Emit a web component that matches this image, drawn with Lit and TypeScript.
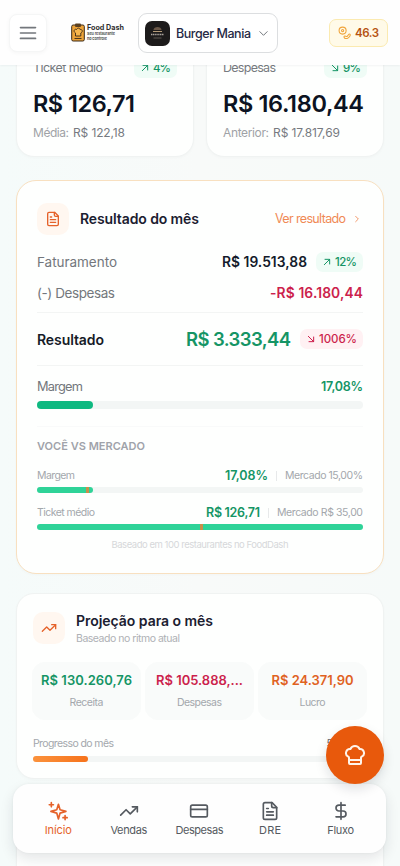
import { LitElement, html, css, svg, nothing } from "lit";
import { customElement, property } from "lit/decorators.js";
import { styleMap } from "lit/directives/style-map.js";

// Single-line label whose tracking is adjusted so that it spans a given width.
@customElement("fit-text")
class FitText extends LitElement {
  @property({ type: Number }) width = 0;
  @property() text = "";
  static styles = css`
    :host { display: inline-block; white-space: nowrap; flex: none; }
    .label { display: inline-block; white-space: pre; }
  `;
  render() {
    return html`<span class="label">${this.text}</span>`;
  }
  updated() {
    const label = this.renderRoot.querySelector(".label") as HTMLElement;
    label.style.letterSpacing = "0px";
    const natural = label.getBoundingClientRect().width;
    const step = (this.width - natural) / Math.max(1, this.text.length - 1);
    label.style.letterSpacing = `${step}px`;
    label.style.marginRight = `${-step}px`;
  }
}

const t = (text: string, width: number, cls = "") =>
  html`<fit-text class=${cls} .text=${text} .width=${width}></fit-text>`;

const shapes = {
  menu: svg`<path d="M3 5.500h18M3 12h18M3 18.500h18"/>`,
  down: svg`<path d="m4 8 8 8 8-8"/>`,
  right: svg`<path d="m8 4 8 8-8 8"/>`,
  upRight: svg`<path d="M4 20 20 4M6 4h14v14"/>`,
  downRight: svg`<path d="m4 4 16 16M20 6v14H6"/>`,
  file: svg`<path d="M14.500 2H6a2 2 0 0 0-2 2v16a2 2 0 0 0 2 2h12a2 2 0 0 0 2-2V7.500z"/><path d="M14 2v4a2 2 0 0 0 2 2h4M8 9h2M8 13h8M8 17h8"/>`,
  trend: svg`<path d="m2 17 6.500-6.500 5 5L22 7"/><path d="M16 7h6v6"/>`,
  card: svg`<rect x="2" y="5" width="20" height="14" rx="2"/><path d="M2 10h20"/>`,
  dollar: svg`<path d="M12 2v20M17 5H9.500a3.500 3.500 0 0 0 0 7h5a3.500 3.500 0 0 1 0 7H6"/>`,
  sparkle: svg`<path d="M12.500 4 14.500 10.500 21.500 12.500 14.500 14.500 12.500 21.500 10.500 14.500 3.500 12.500 10.500 10.500z"/><path d="M4 2v5M1.500 4.500h5M20.500 17.500v5M18 20h5"/>`,
  chef: svg`<path d="M17 21a1 1 0 0 0 1-1v-5.350c0-.457.316-.844.727-1.041a4 4 0 0 0-2.134-7.589 5 5 0 0 0-9.186 0 4 4 0 0 0-2.134 7.588c.411.198.727.585.727 1.041V20a1 1 0 0 0 1 1ZM6 17h12"/>`,
  coins: svg`<circle cx="8.500" cy="8.500" r="6.500"/><circle cx="8.500" cy="8.500" r="2"/><path d="M11 20c2-4 4 1 6-1s3-5 5-4-1 7-5 8-6-1-6-3z"/>`,
};
type Shape = keyof typeof shapes;
const icon = (name: Shape, cls = "") =>
  html`<svg class="icon ${cls}" viewBox="0 0 24 24">${shapes[name]}</svg>`;

const bar = (fill: number, cls: string, mark?: number) => html`
  <div class="bar ${cls}">
    <div class="fill" style=${styleMap({ width: `${fill}%` })}></div>
    ${mark === undefined ? nothing : html`<i class="mark" style=${styleMap({ left: `${mark}%` })}></i>`}
  </div>`;

@customElement("app-root")
class AppRoot extends LitElement {
  static styles = css`
    :host {
      display: block; position: relative; height: 866px; overflow: hidden;
      background: linear-gradient(90deg, #f5fbfa, #f8faf9 50%, #f6faf9);
      font-family: Inter, "Liberation Sans", sans-serif; color: #141b2b;
    }
    * { box-sizing: border-box; }
    .icon { display: block; flex: none; fill: none; stroke: currentColor; stroke-width: 2; stroke-linecap: round; stroke-linejoin: round; }
    .row { display: flex; align-items: center; justify-content: space-between; }
    .end { display: flex; align-items: center; }

    header {
      position: absolute; inset: 0 0 auto 0; height: 65px; z-index: 2; background: #fefefe;
      display: flex; align-items: center; padding: 1px 12px 0 9px; box-shadow: 0 1px 2px #0f172a0c;
    }
    .menu { width: 38px; height: 38px; border-radius: 8px; background: #fff; border: 1px solid #f5f6f6; box-shadow: 0 1px 4px #0000000a; display: grid; place-items: center; color: #73777c; }
    .menu .icon { width: 20px; height: 20px; }
    .brand { display: flex; margin: 0 0 2px 24px; width: 67px; gap: 2px; align-items: center; }
    .clip { width: 14px; height: 19px; flex: none; display: block; }
    .words { display: flex; flex-direction: column; }
    .b1 { font-size: 7.200px; line-height: 9px; font-weight: 700; color: #303030; }
    .b2 { font-size: 3.800px; line-height: 4.500px; font-weight: 600; color: #444; }
    .store { display: flex; align-items: center; width: 140px; height: 40px; border: 1px solid #dcdee0; border-radius: 9px; background: #fff; padding: 0 8px 0 6px; }
    .avatar { width: 25px; height: 25px; margin-right: 6px; flex: none; }
    .name { font-size: 12.500px; font-weight: 500; color: #262a45; }
    .store .icon { width: 11px; height: 11px; margin-left: auto; color: #666a70; }
    .credits { margin: -1px 0 0 auto; width: 59px; height: 28px; border-radius: 7px; background: #fffae8; border: 1px solid #fbeab0; display: flex; align-items: center; justify-content: space-between; padding: 0 8px; color: #b65312; font-size: 11.500px; font-weight: 600; }
    .credits .icon { width: 13px; height: 13px; color: #f0a53c; }

    main { padding: 37px 16px 0; }
    .card { background: #fefffe; border: 1px solid #f0f3f2; border-radius: 18px; box-shadow: 0 1px 3px #0f172a06; }
    .pair { display: grid; grid-template-columns: 178px 178px; gap: 12px; }
    .kpi { height: 120px; padding: 19px 16px 0; }
    .kpi .row { height: 21px; }
    .muted { font-size: 12.500px; color: #777b80; }
    .big { font-size: 23.500px; line-height: 28px; font-weight: 600; display: block; margin-top: 12px; color: #0c1322; }
    .foot { margin-top: 7px; line-height: 16px; font-size: 12px; color: #9fa2a6; display: flex; gap: 4px; }
    .foot .v { color: #767a80; }

    .chip { display: inline-flex; align-items: center; justify-content: center; height: 20px; border-radius: 7px; gap: 4px; padding: 0 6px; font-size: 11.500px; font-weight: 500; background: #effcf6; color: #159565; }
    .chip .icon { width: 8px; height: 8px; stroke-width: 3; margin-left: 1px; }
    .chip.bad { background: #fff1f3; color: #cc1f4c; }

    .result { margin-top: 23px; height: 394px; border-color: #f8e0c0; border-radius: 20px; padding: 21px 20px 0; }
    .result .head { height: 33px; }
    .tile { width: 32px; height: 32px; border-radius: 10px; background: #fff7f0; color: #e5622a; display: grid; place-items: center; flex: none; }
    .tile .icon { width: 16px; height: 16px; }
    .title { font-size: 14px; font-weight: 600; color: #1b2030; }
    .result .title { margin-left: 11px; }
    .link { display: flex; align-items: center; gap: 7px; font-size: 12.500px; color: #f08a55; padding-right: 2px; }
    .link .icon { width: 8px; height: 8px; stroke-width: 2.600; }
    .line { height: 31px; }
    .line.first { margin-top: 11px; }
    .lbl { font-size: 13.500px; color: #73777c; }
    .amt { font-size: 13.800px; font-weight: 600; }
    .red { color: #cc1f4c; }
    .green { color: #159565; }
    .orange { color: #e0621f; }
    .total { height: 54px; border-top: 1px solid #f3f5f4; border-bottom: 1px solid #f3f5f4; margin-top: 4px; }
    .strong { font-size: 14px; font-weight: 600; color: #161b28; }
    .sum { font-size: 18.500px; font-weight: 600; }
    .gap9 { gap: 9px; }
    .margin { height: 23px; margin-top: 9px; }
    .margin .lbl { font-size: 12.800px; }
    .pct { font-size: 12.500px; font-weight: 600; }
    .bar { position: relative; background: #f3f6f5; border-radius: 9px; }
    .fill { height: 100%; border-radius: 9px; background: #2fd398; }
    .b8 { height: 8px; margin-top: 3px; }
    .b8 .fill { background: #0fb981; }
    .b6 { height: 6px; margin-top: 3px; }
    .mark { position: absolute; top: 0; width: 3px; height: 6px; background: #c98f4c; }
    .sect { font-size: 11px; line-height: 16px; font-weight: 600; color: #a0a3aa; display: block; }
    .market { border-top: 1px solid #f9fafa; margin-top: 17px; padding-top: 11px; }
    .cmp { height: 17px; }
    .cmp.a { margin-top: 13px; }
    .cmp.b { margin-top: 11px; }
    .small { font-size: 10.500px; color: #a3a7ac; }
    .cmp .end { gap: 8px; }
    .sep { width: 1px; height: 10px; background: #e7e9ea; }
    .note { text-align: center; font-size: 9.500px; line-height: 14px; color: #d6d8da; margin-top: 8px; }

    .proj { margin-top: 19px; height: 186px; padding: 17px 16px 0; }
    .proj .head { display: flex; align-items: center; gap: 11px; height: 34px; }
    .titles { display: flex; flex-direction: column; margin-top: 1px; }
    .titles .title { line-height: 19px; }
    .titles .small { line-height: 15px; margin-top: 1px; color: #aeb1b5; }
    .tiles { display: grid; grid-template-columns: 109px 109px 109px; gap: 4px; margin: 17px 0 0 -1px; }
    .stat { height: 58px; border-radius: 13px; background: #f9fbfa; border: 1px solid #f9fbfa; display: flex; flex-direction: column; align-items: center; padding-top: 8px; }
    .stat .amt { font-size: 13px; line-height: 19px; }
    .stat .small { margin-top: 5px; line-height: 15px; }
    .progress { height: 16px; margin-top: 15px; padding-right: 34px; }
    .progress .day { font-size: 10.500px; color: #666a70; }
    .proj .b6 { margin-top: 5px; }
    .proj .fill { background: linear-gradient(90deg, #fb923c, #f6731c); }
    .next { margin-top: 19px; height: 200px; }

    nav { position: absolute; z-index: 2; left: 13px; right: 14px; top: 784px; height: 69px; border-radius: 16px; background: #fefefe; box-shadow: 0 6px 14px #0f172a1c, 0 0 3px #0f172a0c; display: flex; padding: 0 10px; }
    .tab { flex: 1; display: flex; flex-direction: column; align-items: center; padding-top: 17px; color: #555a60; font-size: 11px; }
    .tab .icon { width: 20px; height: 20px; }
    .tab fit-text { margin-top: 2px; line-height: 14px; }
    .tab.on { color: #e5622a; }
    .fab { position: absolute; z-index: 3; left: 326px; top: 726px; width: 58px; height: 58px; border-radius: 50%; background: #e8590c; box-shadow: 0 5px 12px #0f172a20; display: grid; place-items: center; color: #fff4ea; }
    .fab .icon { width: 24px; height: 24px; }
  `;

  render() {
    return html`
      <header>
        <div class="menu">${icon("menu")}</div>
        <div class="brand">
          <svg class="clip" viewBox="0 0 14 19">
            <rect x=".7" y="2" width="12.600" height="16" rx="1.500" fill="#eda338" stroke="#3b2a18" stroke-width="1"/>
            <rect x="4" y=".5" width="6" height="3.500" rx="1" fill="#5b4020"/>
            <path d="M4.500 13v-3C1.500 8 4 5.500 5.500 6.500 6.500 4.500 9 5 9 6.500c2-.5 3.500 2 .8 3.500v3z" fill="#f7b64c" stroke="#3b2a18" stroke-width=".9"/>
            <path d="M3.500 15.500h7" stroke="#3b2a18" stroke-width=".9"/>
          </svg>
          <div class="words">${t("Food Dash", 37, "b1")}${t("Seu restaurante", 28, "b2")}${t("no controle", 20, "b2")}</div>
        </div>
        <div class="store">
          <svg class="avatar" viewBox="0 0 25 25">
            <rect width="25" height="25" rx="7" fill="#1d1b1b"/>
            <path d="M8.500 9c0-4 8-4 8 0z" fill="#6b5848"/><path d="M8 10.500h9" stroke="#b39a78"/>
            <path d="M6 13.500h13" stroke="#a9a29c" stroke-width="1.500" stroke-dasharray="1.300 .5"/>
            <path d="M8.500 17h8" stroke="#5e5853"/>
          </svg>
          ${t("Burger Mania", 75, "name")}${icon("down")}
        </div>
        <div class="credits">${icon("coins")}${t("46.3", 24)}</div>
      </header>

      <main>
        <div class="pair">
          <section class="card kpi">
            <div class="row">${t("Ticket médio", 70, "muted")}<span class="chip">${icon("upRight")}${t("4%", 18)}</span></div>
            ${t("R$ 126,71", 102, "big")}
            <div class="foot">${t("Média:", 36)}${t("R$ 122,18", 52, "v")}</div>
          </section>
          <section class="card kpi">
            <div class="row">${t("Despesas", 53, "muted")}<span class="chip">${icon("downRight")}${t("9%", 18)}</span></div>
            ${t("R$ 16.180,44", 141, "big")}
            <div class="foot">${t("Anterior:", 46)}${t("R$ 17.817,69", 67, "v")}</div>
          </section>
        </div>

        <section class="card result">
          <div class="row head">
            <div class="end"><div class="tile">${icon("file")}</div>${t("Resultado do mês", 119, "title")}</div>
            <div class="link">${t("Ver resultado", 71)}${icon("right")}</div>
          </div>
          <div class="row line first">${t("Faturamento", 80, "lbl")}
            <div class="end gap9">${t("R$ 19.513,88", 85, "amt")}<span class="chip">${icon("upRight")}${t("12%", 22)}</span></div>
          </div>
          <div class="row line">${t("(-) Despesas", 78, "lbl")}${t("-R$ 16.180,44", 93, "amt red")}</div>
          <div class="row total">${t("Resultado", 67, "strong")}
            <div class="end gap9">${t("R$ 3.333,44", 105, "sum green")}<span class="chip bad">${icon("downRight")}${t("1006%", 38)}</span></div>
          </div>
          <div class="row margin">${t("Margem", 46, "lbl")}${t("17,08%", 42, "pct green")}</div>
          ${bar(17.08, "b8")}
          <div class="market">
            ${t("VOCÊ VS MERCADO", 108, "sect")}
            <div class="row cmp a">${t("Margem", 38, "small")}
              <div class="end">${t("17,08%", 43, "pct green")}<i class="sep"></i>${t("Mercado 15,00%", 78, "small")}</div>
            </div>
            ${bar(17.08, "b6", 15)}
            <div class="row cmp b">${t("Ticket médio", 58, "small")}
              <div class="end">${t("R$ 126,71", 54, "pct green")}<i class="sep"></i>${t("Mercado R$ 35,00", 86, "small")}</div>
            </div>
            ${bar(100, "b6", 50)}
            <div class="note">${t("Baseado em 100 restaurantes no FoodDash", 177)}</div>
          </div>
        </section>

        <section class="card proj">
          <div class="head"><div class="tile">${icon("trend")}</div>
            <div class="titles">${t("Projeção para o mês", 137, "title")}${t("Baseado no ritmo atual", 104, "small")}</div>
          </div>
          <div class="tiles">
            <div class="stat">${t("R$ 130.260,76", 91, "amt green")}${t("Receita", 34, "small")}</div>
            <div class="stat">${t("R$ 105.888,...", 87, "amt red")}${t("Despesas", 45, "small")}</div>
            <div class="stat">${t("R$ 24.371,90", 82, "amt orange")}${t("Lucro", 26, "small")}</div>
          </div>
          <div class="row progress">${t("Progresso do mês", 81, "small")}${t("5", 7, "day")}</div>
          ${bar(16.5, "b6")}
        </section>
        <section class="card next"></section>
      </main>

      <div class="fab">${icon("chef")}</div>
      <nav>
        <div class="tab on">${icon("sparkle")}${t("Início", 27)}</div>
        <div class="tab">${icon("trend")}${t("Vendas", 37)}</div>
        <div class="tab">${icon("card")}${t("Despesas", 48)}</div>
        <div class="tab">${icon("file")}${t("DRE", 22)}</div>
        <div class="tab">${icon("dollar")}${t("Fluxo", 27)}</div>
      </nav>
    `;
  }
}
